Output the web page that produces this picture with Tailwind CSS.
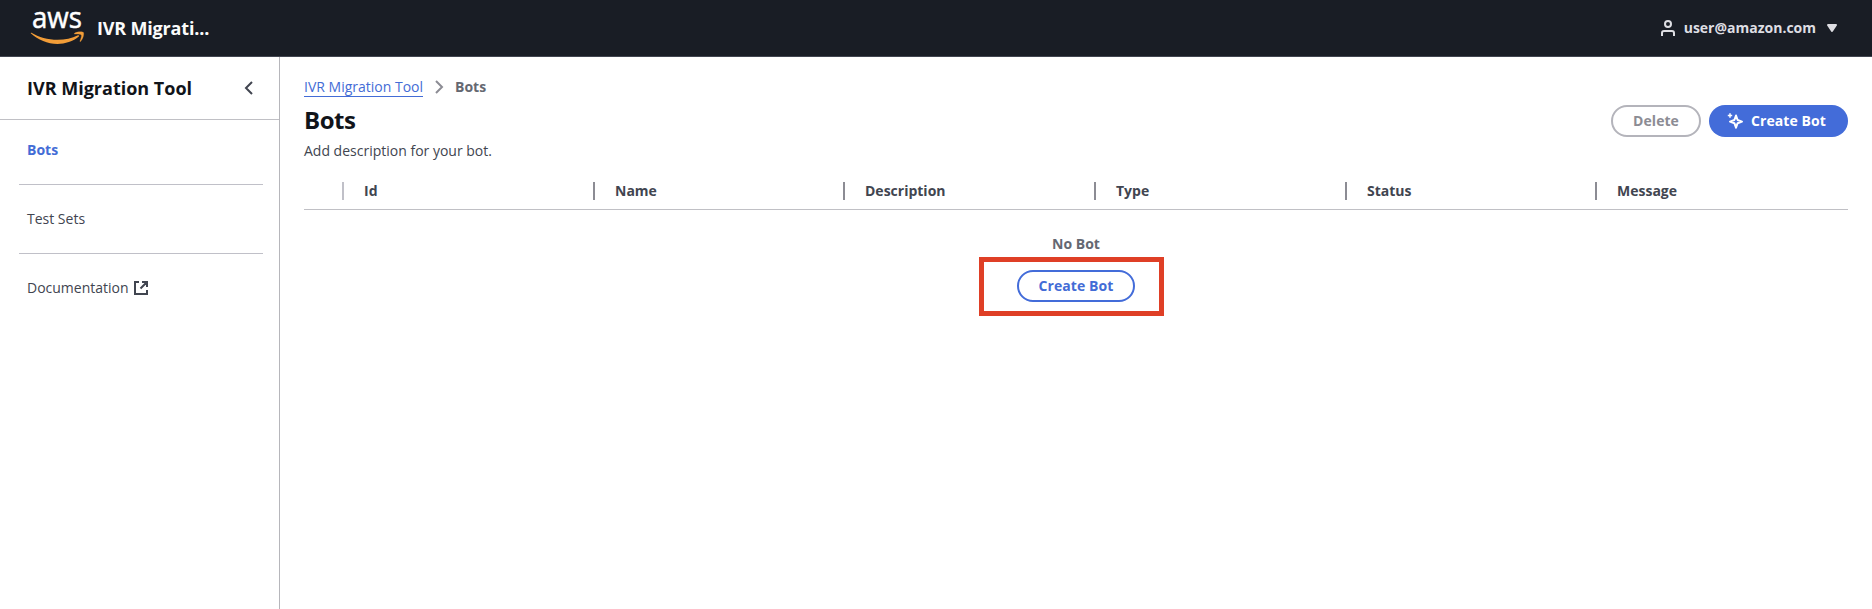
<!DOCTYPE html>
<html lang="en">
<head>
<meta charset="utf-8">
<title>IVR Migration Tool</title>
<script src="https://cdn.jsdelivr.net/npm/@tailwindcss/browser@4"></script>
</head>
<body class="h-[609px] overflow-hidden bg-white font-['Open_Sans','Noto_Sans',sans-serif] text-sm leading-5 text-[#414550]">
<header class="flex h-[57px] items-center justify-between border-b border-[#414550] bg-[#191d25] pr-[32px] pl-[30px]">
  <div class="flex items-center">
    <svg class="h-[36px] w-[56px] overflow-visible" viewBox="0 0 56 36" fill="none">
      <text x="2" y="18.300" font-size="29" font-weight="500" fill="#fff" stroke="#fff" stroke-width="0.5" textLength="50" lengthAdjust="spacingAndGlyphs">aws</text>
      <path d="M1.5 22.800c7 4.500 16.500 7 26 7 7.500 0 14.500-1.500 20.500-4.500.9-.5 1.700.6.8 1.300C43.300 31.500 35 34 27.500 34 17.500 34 8 30 1 23.600c-.6-.5 0-1.200.5-.8Z" fill="#f29d38"/>
      <path d="M44.500 23.300c2.200-1.600 8.300-1.900 9-.7.6 1-.2 6.400-2.900 8.800-.5.400-.9.200-.7-.3.700-1.700 2-5.200 1.400-6.200-.6-.9-4.300-.9-6.300-.8-.8.100-1-.4-.5-.8Z" fill="#f29d38" stroke="#f29d38" stroke-width="0.3"/>
    </svg>
    <h1 class="ml-[11px] text-lg leading-6 font-bold tracking-[-0.18px] text-[#fbfbfb]">IVR Migrati...</h1>
  </div>
  <div class="flex items-center font-bold text-[#dedee3]">
    <svg class="size-4 overflow-visible" viewBox="0 0 16 16" fill="none" stroke="currentColor" stroke-width="2"><circle cx="8" cy="4" r="3"/><path d="M2 16v-3c0-1.100.9-2 2-2h8c1.100 0 2 .9 2 2v3"/></svg>
    <span class="ml-2">user@amazon.com</span>
    <svg class="ml-2 size-4" viewBox="0 0 16 16"><path d="M4 5h8l-4 6z" fill="currentColor" stroke="currentColor" stroke-width="2" stroke-linejoin="round"/></svg>
  </div>
</header>
<div class="flex h-[552px]">
  <nav class="w-[280px] shrink-0 border-r border-[#b6b6bb]">
    <div class="flex h-[63px] items-center justify-between border-b border-[#c0c0c5] pr-[22px] pl-[27px]">
      <h2 class="text-lg leading-6 font-bold text-[#11141a]">IVR Migration Tool</h2>
      <svg class="size-4" viewBox="0 0 16 16" fill="none" stroke="currentColor" stroke-width="2"><path d="M11 2 5 8l6 6"/></svg>
    </div>
    <ul class="mr-4 ml-[19px]">
      <li class="h-[65px] border-b border-[#c0c0c8] pt-5 pl-2 font-bold text-[#436cd6]">Bots</li>
      <li class="h-[69px] border-b border-[#c0c0c8] pt-6 pl-2">Test Sets</li>
      <li class="flex items-center pt-6 pl-2">Documentation
        <svg class="ml-1 size-4" viewBox="0 0 16 16" fill="none" stroke="currentColor" stroke-width="2"><path d="M6 2H2v12h12v-4M9 2h5v5M14 2 7.500 8.500"/></svg>
      </li>
    </ul>
  </nav>
  <main class="flex-1 pt-5 pr-6 pl-6">
    <div class="flex h-5 items-center">
      <a class="h-5 border-b border-[#436cd6] text-[#436cd6]">IVR Migration Tool</a>
      <svg class="mx-2 size-4" viewBox="0 0 16 16" fill="none" stroke="#8c8c94" stroke-width="2"><path d="m5 2 6 6-6 6"/></svg>
      <span class="font-bold text-[#656871]">Bots</span>
    </div>
    <div class="mt-2 flex h-[56px] justify-between">
      <div>
        <h1 class="text-2xl leading-[30px] font-bold tracking-[-0.48px] text-[#11141a]">Bots</h1>
        <p class="mt-[6px]">Add description for your bot.</p>
      </div>
      <div class="flex h-8 gap-2 font-bold tracking-[0.07px]">
        <button class="h-8 w-[90px] rounded-full border-2 border-[#b4b4bb] text-[#8c8c94]">Delete</button>
        <button class="flex h-8 w-[139px] items-center rounded-full bg-[#436cd9] pl-[18px] text-white">
          <svg class="mr-2 size-4 overflow-visible" viewBox="0 0 16 16" fill="none" stroke="currentColor" stroke-width="2"><path d="M9 2.500 10.600 7 15 8.600 10.600 10.200 9 14.700 7.400 10.200 3 8.600 7.400 7Z" stroke-linejoin="round"/><path d="M3 .3v4.400M.8 2.500h4.400" stroke-width="1.500"/></svg>
          Create Bot
        </button>
      </div>
    </div>
    <div class="flex h-[49px] items-end border-b border-[#c0c0c5] pb-[9px] font-bold">
      <div class="flex h-[18px] w-[40px] shrink-0 items-center border-r-2 border-[#c0c0c8]"></div>
      <div class="flex h-[18px] w-[251px] shrink-0 items-center border-r-2 border-[#8c8c94] pl-5">Id</div>
      <div class="flex h-[18px] w-[250px] shrink-0 items-center border-r-2 border-[#8c8c94] pl-5">Name</div>
      <div class="flex h-[18px] w-[251px] shrink-0 items-center border-r-2 border-[#8c8c94] pl-5">Description</div>
      <div class="flex h-[18px] w-[251px] shrink-0 items-center border-r-2 border-[#8c8c94] pl-5">Type</div>
      <div class="flex h-[18px] w-[250px] shrink-0 items-center border-r-2 border-[#8c8c94] pl-5">Status</div>
      <div class="flex h-[18px] items-center pl-5">Message</div>
    </div>
    <div class="flex flex-col items-center pt-6 font-bold">
      <p class="text-[#656871]">No Bot</p>
      <div class="mt-[3px] mr-[9px] flex h-[59px] w-[185px] border-[5px] border-[#df3f26] pt-2 pl-[33px]">
        <button class="h-8 w-[118px] rounded-full border-2 border-[#436cd9] tracking-[0.07px] text-[#436cd6]">Create Bot</button>
      </div>
    </div>
  </main>
</div>
</body>
</html>
